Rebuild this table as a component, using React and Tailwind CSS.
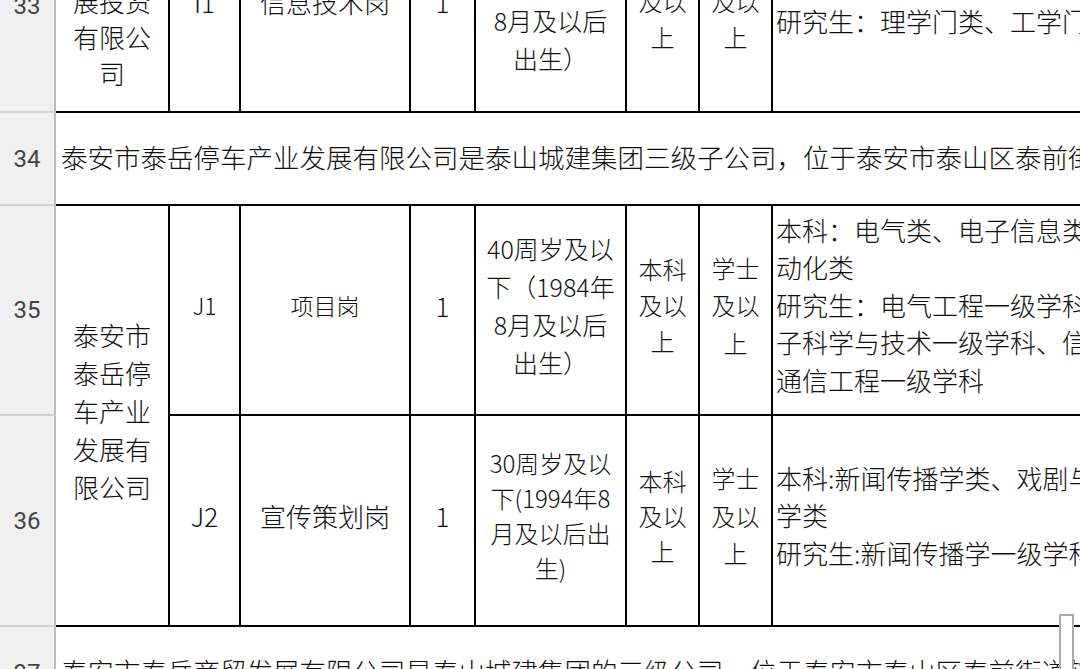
import React from "react";

const cjk = "font-['Noto_Sans_CJK_SC','Noto_Sans',sans-serif] font-light text-[#111]";
const head =
  "flex items-center justify-center border-r-2 border-b-2 border-r-[#bdbdbd] border-b-[#d2d2d2] bg-[#f0f0f0] font-['Roboto','Noto_Sans',sans-serif] font-normal text-[24px] text-[#444]";
const cell = "flex flex-col items-center justify-center border-r-2 border-b-2 border-black pb-[10px] text-center";
const major =
  "flex flex-col items-start justify-center border-r-2 border-b-2 border-black pl-[3px] pb-[11px] whitespace-nowrap overflow-hidden";
const wide =
  "col-span-8 flex items-center border-r-2 border-b-2 border-black pl-[5px] pb-[4px] whitespace-nowrap overflow-hidden text-[26.5px]";

function Lines({ items, size = "text-[26px]", lead = "leading-[37px]" }) {
  return (
    <div className={`${size} ${lead}`}>
      {items.map((t, i) => (
        <div key={i} className="whitespace-nowrap">
          {t}
        </div>
      ))}
    </div>
  );
}

export default function App() {
  return (
    <div className={`relative h-[669px] w-[1080px] overflow-hidden bg-white ${cjk}`}>
      <div className="-mt-[99px] grid grid-cols-[56px_114px_71px_170px_65px_151px_73px_73px_420px] grid-rows-[212px_93px_210px_211px_93px]">
        {/* row 33 */}
        <div className={head}>33</div>
        <div className={cell}>
          <Lines items={["泰安市", "文化发", "展投资", "有限公", "司"]} lead="leading-[36px]" />
        </div>
        <div className={cell}>
          <Lines items={["I1"]} />
        </div>
        <div className={cell}>
          <Lines items={["信息技术岗"]} />
        </div>
        <div className={cell}>
          <Lines items={["1"]} />
        </div>
        <div className={cell}>
          <Lines items={["40周岁及以", "下（1984年", "8月及以后", "出生）"]} size="text-[25px]" lead="leading-[38px]" />
        </div>
        <div className={cell}>
          <Lines items={["本科", "及以", "上"]} size="text-[24px]" lead="leading-[36px]" />
        </div>
        <div className={cell}>
          <Lines items={["学士", "及以", "上"]} size="text-[24px]" lead="leading-[36px]" />
        </div>
        <div className={major}>
          <Lines items={["本科：理学门类、工学门类", "研究生：理学门类、工学门类"]} lead="leading-[40px]" />
        </div>

        {/* row 34 */}
        <div className={head}>34</div>
        <div className={wide}>
          泰安市泰岳停车产业发展有限公司是泰山城建集团三级子公司，位于泰安市泰山区泰前街道
        </div>

        {/* rows 35-36 */}
        <div className={head}>35</div>
        <div className={`${cell} row-span-2`}>
          <Lines items={["泰安市", "泰岳停", "车产业", "发展有", "限公司"]} lead="leading-[38px]" />
        </div>
        <div className={cell}>
          <Lines items={["J1"]} size="text-[23px]" />
        </div>
        <div className={cell}>
          <Lines items={["项目岗"]} size="text-[23px]" />
        </div>
        <div className={cell}>
          <Lines items={["1"]} />
        </div>
        <div className={cell}>
          <Lines items={["40周岁及以", "下（1984年", "8月及以后", "出生）"]} size="text-[25px]" lead="leading-[38px]" />
        </div>
        <div className={`${cell} pb-[8px]`}>
          <Lines items={["本科", "及以", "上"]} size="text-[24px]" lead="leading-[36px]" />
        </div>
        <div className={cell}>
          <Lines items={["学士", "及以", "上"]} size="text-[24px]" lead="leading-[37.5px]" />
        </div>
        <div className={major}>
          <Lines
            items={[
              "本科：电气类、电子信息类、自",
              "动化类",
              "研究生：电气工程一级学科、电",
              "子科学与技术一级学科、信息与",
              "通信工程一级学科",
            ]}
            lead="leading-[37.5px]"
          />
        </div>

        <div className={head}>36</div>
        <div className={cell}>
          <Lines items={["J2"]} />
        </div>
        <div className={cell}>
          <Lines items={["宣传策划岗"]} />
        </div>
        <div className={cell}>
          <Lines items={["1"]} />
        </div>
        <div className={`${cell} pb-[12px]`}>
          <Lines items={["30周岁及以", "下(1994年8", "月及以后出", "生)"]} size="text-[24px]" lead="leading-[35px]" />
        </div>
        <div className={`${cell} pb-[8px]`}>
          <Lines items={["本科", "及以", "上"]} size="text-[24px]" lead="leading-[35px]" />
        </div>
        <div className={cell}>
          <Lines items={["学士", "及以", "上"]} size="text-[24px]" lead="leading-[37.5px]" />
        </div>
        <div className={major}>
          <Lines items={["本科:新闻传播学类、戏剧与影视", "学类", "研究生:新闻传播学一级学科"]} lead="leading-[37.5px]" />
        </div>

        {/* row 37 */}
        <div className={head}>37</div>
        <div className={wide}>
          泰安市泰岳商贸发展有限公司是泰山城建集团的三级公司，位于泰安市泰山区泰前街道辖区
        </div>
      </div>

      {/* fill handle at bottom right */}
      <div className="absolute left-[1059px] top-[614px] h-[70px] w-[15px] border-2 border-[#a9a9a9] bg-white" />
    </div>
  );
}
